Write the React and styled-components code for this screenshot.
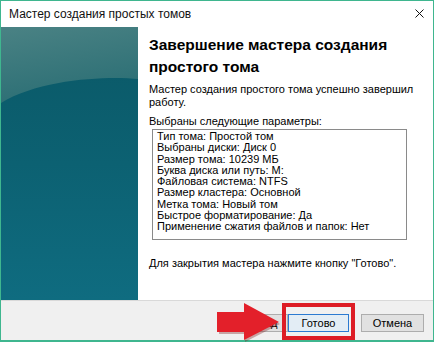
import React from "react";
import styled, { createGlobalStyle } from "styled-components";

const GlobalStyle = createGlobalStyle`
  html, body {
    margin: 0;
    padding: 0;
    background: #ffffff;
  }
  body {
    width: 434px;
    height: 342px;
    overflow: hidden;
  }
`;

const Window = styled.div`
  width: 434px;
  height: 342px;
  box-sizing: border-box;
  border: 1px solid #3fb68f;
  border-bottom-width: 2px;
  display: flex;
  flex-direction: column;
  background: #ffffff;
  font-family: "Liberation Sans", Arial, sans-serif;
  color: #000000;
`;

const TitleBar = styled.div`
  height: 26px;
  flex: none;
  display: flex;
  align-items: center;
  justify-content: space-between;
  padding: 0 9px 0 8px;
  font-size: 12px;
  color: #111111;
`;

const CloseIcon = styled.svg`
  width: 9px;
  height: 9px;
  margin-top: -2px;
`;

const Body = styled.div`
  flex: 1;
  display: flex;
  min-height: 0;
`;

const SidePanel = styled.div`
  width: 137px;
  flex: none;
  display: flex;
  svg {
    width: 100%;
    height: 100%;
    display: block;
  }
`;

const Content = styled.div`
  flex: 1;
  display: flex;
  flex-direction: column;
  padding: 7px 0 0 11px;
  font-size: 11px;
`;

const Heading = styled.h1`
  margin: 0;
  font-size: 15.5px;
  line-height: 22px;
  font-weight: bold;
  width: 265px;
`;

const Paragraph = styled.p`
  margin: ${(p) => p.$top || 0}px 0 0 0;
  line-height: 13px;
  width: ${(p) => p.$width || 270}px;
`;

const ListBox = styled.div`
  margin: 1px 0 0 3px;
  width: 255px;
  height: 111px;
  flex: none;
  box-sizing: border-box;
  border: 1px solid #8a8a8a;
  padding: 1px 0 0 4px;
`;

const ListItem = styled.div`
  line-height: 11.3px;
  white-space: nowrap;
`;

const Separator = styled.div`
  height: 1px;
  flex: none;
  background: #d9d9d9;
`;

const ButtonBar = styled.div`
  position: relative;
  height: 39px;
  flex: none;
  box-sizing: border-box;
  background: #f0f0f0;
  display: flex;
  justify-content: flex-end;
  align-items: flex-start;
  padding: 13px 9px 0 0;
`;

const Button = styled.button`
  width: ${(p) => p.$width || 62}px;
  height: 18px;
  box-sizing: border-box;
  padding: 0;
  margin-left: ${(p) => p.$gap || 0}px;
  font-family: "Liberation Sans", Arial, sans-serif;
  font-size: 11px;
  color: #000000;
  background: ${(p) => (p.$primary ? "#e3edf5" : "#e1e1e1")};
  border: 1px solid ${(p) => (p.$primary ? "#2b7ad1" : "#adadad")};
`;

const Highlight = styled.div`
  position: relative;
  display: flex;
  &::after {
    content: "";
    position: absolute;
    top: -11px;
    left: -6px;
    right: -6px;
    bottom: -8px;
    border: 4px solid #dd1c25;
    pointer-events: none;
  }
`;

const Arrow = styled.svg`
  position: absolute;
  left: 215px;
  top: 1px;
  width: 66px;
  height: 40px;
`;

const params = [
  "Тип тома: Простой том",
  "Выбраны диски: Диск 0",
  "Размер тома: 10239 МБ",
  "Буква диска или путь: M:",
  "Файловая система: NTFS",
  "Размер кластера: Основной",
  "Метка тома: Новый том",
  "Быстрое форматирование: Да",
  "Применение сжатия файлов и папок: Нет",
];

const PanelArt = () => (
  <svg viewBox="0 0 137 273" preserveAspectRatio="none">
    <defs>
      <linearGradient id="base" x1="0" y1="0" x2="0" y2="1">
        <stop offset="0" stopColor="#0a5866" />
        <stop offset="0.5" stopColor="#0c6172" />
        <stop offset="1" stopColor="#0f6c80" />
      </linearGradient>
      <linearGradient id="cap" x1="0" y1="0" x2="0.3" y2="1">
        <stop offset="0" stopColor="#4a8284" />
        <stop offset="1" stopColor="#2c6f75" />
      </linearGradient>
    </defs>
    <rect x="0" y="0" width="137" height="273" fill="url(#base)" />
    <path d="M0 0 H137 V52 C110 49 40 51 0 76 Z" fill="url(#cap)" />
  </svg>
);

export default function App() {
  return (
    <>
      <GlobalStyle />
      <Window>
        <TitleBar>
          <span>Мастер создания простых томов</span>
          <CloseIcon viewBox="0 0 9 9">
            <path d="M0.5 0.5 L8.5 8.5 M8.5 0.5 L0.5 8.5" stroke="#111" strokeWidth="1" />
          </CloseIcon>
        </TitleBar>
        <Body>
          <SidePanel>
            <PanelArt />
          </SidePanel>
          <Content>
            <Heading>Завершение мастера создания простого тома</Heading>
            <Paragraph $top={5}>
              Мастер создания простого тома успешно завершил работу.
            </Paragraph>
            <Paragraph $top={6}>Выбраны следующие параметры:</Paragraph>
            <ListBox>
              {params.map((item, index) => (
                <ListItem key={index}>{item}</ListItem>
              ))}
            </ListBox>
            <Paragraph $top={17}>
              Для закрытия мастера нажмите кнопку "Готово".
            </Paragraph>
          </Content>
        </Body>
        <Separator />
        <ButtonBar>
          <Button>&lt; Назад</Button>
          <Highlight>
            <Button $primary $width={61}>Готово</Button>
          </Highlight>
          <Button $width={63} $gap={12}>Отмена</Button>
          <Arrow viewBox="0 0 66 40">
            <path d="M3 12 H29 V3 L64 22 L29 40 V32 H3 Z" fill="#7a1a1a" opacity="0.35" />
            <path d="M1 10 H28 V1 L63 20 L28 38 V30 H1 Z" fill="#e3202a" />
          </Arrow>
        </ButtonBar>
      </Window>
    </>
  );
}
